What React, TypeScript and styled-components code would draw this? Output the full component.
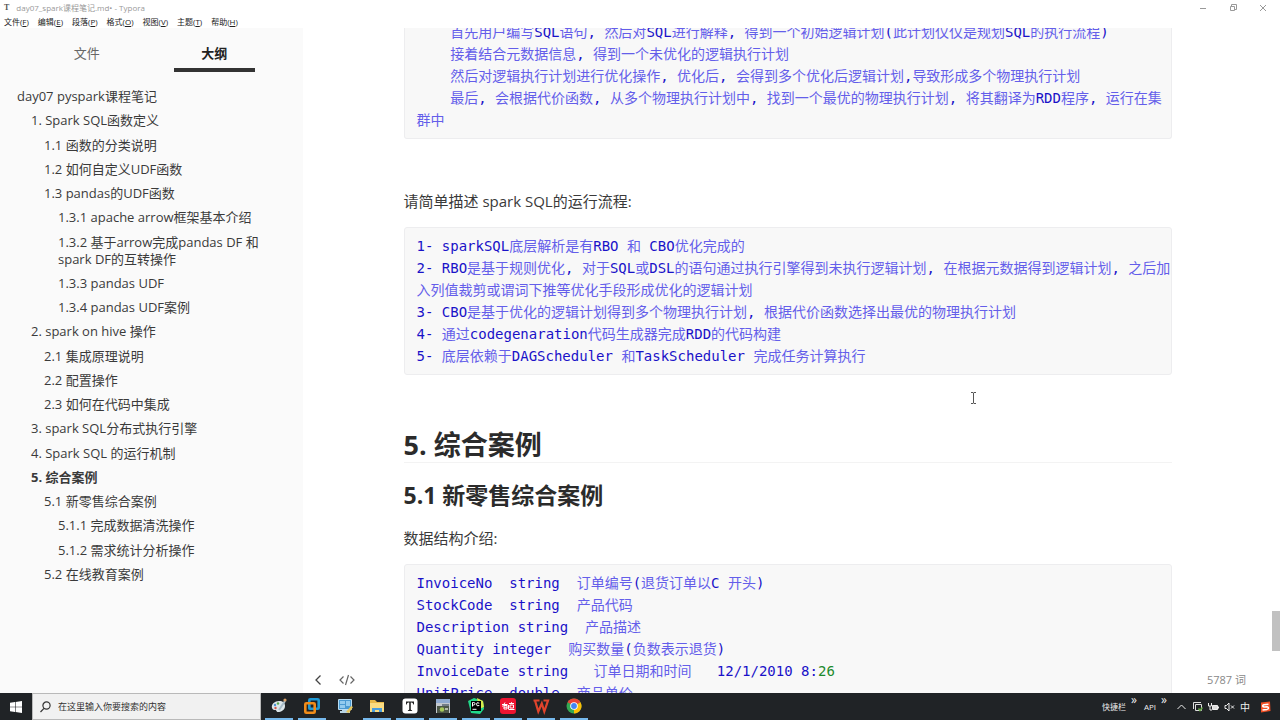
import React from 'react';
import styled, { createGlobalStyle } from 'styled-components';

const uiFont = '"Open Sans", "Noto Sans CJK SC", sans-serif';
const monoFont = '"DejaVu Sans Mono", "Noto Sans CJK SC", monospace';

const GlobalStyle = createGlobalStyle`
  * { box-sizing: border-box; }
  body { margin: 0; background: #fff; font-family: ${uiFont}; color: #3a3a3a; }
  button, input { font: inherit; color: inherit; margin: 0; padding: 0; border: 0; background: none; }
  h2, h3, p, pre, ul { margin: 0; padding: 0; }
  a { color: inherit; text-decoration: none; }
`;

const Desktop = styled.div`
  display: flex;
  flex-direction: column;
  height: 100vh;
  overflow: hidden;
`;

const TitleBar = styled.header`
  display: flex;
  align-items: center;
  justify-content: space-between;
  height: 15px;
  padding: 0 12px 0 4px;
  font-size: 8px;
  line-height: 15px;
  color: #999;
`;

const TitleText = styled.div`
  display: flex;
  gap: 7px;
`;

const Logo = styled.span`
  font-family: "Liberation Serif", serif;
  font-weight: 700;
  color: #555;
`;

const WindowButtons = styled.div`
  display: flex;
  gap: 20px;
`;

const IconButton = styled.button`
  display: flex;
  align-items: center;
  justify-content: center;
`;

const MenuBar = styled.nav`
  display: flex;
  gap: 9px;
  height: 13px;
  padding-left: 4px;
  font-size: 8px;
  line-height: 14px;
  color: #222;
`;

const MenuButton = styled.button`
  white-space: nowrap;
`;

const Workspace = styled.div`
  display: flex;
  flex: 1;
  min-height: 0;
`;

const Sidebar = styled.aside`
  flex: none;
  width: 303px;
  background: #fafafa;
`;

const Tabs = styled.div`
  display: flex;
  justify-content: space-around;
  padding: 11px 25px 0 23px;
`;

const Tab = styled.button<{ $active?: boolean }>`
  width: 81px;
  height: 33px;
  padding-bottom: 2px;
  font-size: 13px;
  font-weight: ${(p) => (p.$active ? 700 : 400)};
  color: ${(p) => (p.$active ? '#222' : '#666')};
  border-bottom: 4px solid ${(p) => (p.$active ? '#333' : 'transparent')};
`;

const Outline = styled.ul`
  display: flex;
  flex-direction: column;
  justify-content: space-between;
  min-height: 495px;
  margin-top: 16px;
  padding-right: 40px;
  list-style: none;
  font-size: 13px;
  line-height: 17px;
`;

const OutlineItem = styled.li<{ $level: number; $active?: boolean }>`
  padding-left: ${(p) => [17, 31, 44, 58][p.$level]}px;
  font-weight: ${(p) => (p.$active ? 700 : 400)};
`;

const Editor = styled.main`
  position: relative;
  display: flex;
  flex: 1;
  min-width: 0;
  overflow: hidden;
`;

const Page = styled.article`
  flex: 1;
  max-width: 768px;
  margin: -7px auto 0;
`;

const CodeBlock = styled.pre<{ $continued?: boolean }>`
  padding: ${(p) => (p.$continued ? '0' : '7px')} 0 7px 12px;
  border: 1px solid #ededef;
  border-top-width: ${(p) => (p.$continued ? 0 : 1)}px;
  border-radius: 3px;
  background: #f8f8f8;
  font-family: ${monoFont};
  font-size: 14px;
  line-height: 22px;
  color: #1a12c8;
`;

const CodeLine = styled.div`
  height: 22px;
  white-space: pre;
`;

const Han = styled.span`
  color: #645eea;
`;

const Num = styled.span`
  color: #1c8a2c;
`;

const Paragraph = styled.p<{ $first?: boolean }>`
  margin: ${(p) => (p.$first ? '50px 0 14px' : '15px 0 14px')};
  font-size: 15px;
  line-height: 24px;
`;

const ChapterTitle = styled.h2`
  margin-top: 53px;
  border-bottom: 1px solid #f3f3f3;
  font-size: 27px;
  line-height: 34px;
  color: #2b2b2b;
`;

const SectionTitle = styled.h3`
  margin-top: 16px;
  font-size: 23px;
  line-height: 32px;
  color: #2b2b2b;
`;

const Scrollbar = styled.div`
  display: flex;
  flex: none;
  width: 8px;
  padding-top: 583px;
`;

const Thumb = styled.div`
  width: 8px;
  height: 40px;
  background: #c1c1c1;
`;

const StatusTools = styled.div`
  position: absolute;
  left: 10px;
  bottom: 6px;
  display: flex;
  gap: 16px;
`;

const WordCount = styled.button`
  position: absolute;
  right: 34px;
  bottom: 5px;
  font-size: 11px;
  line-height: 16px;
  color: #888;
`;

const Caret = styled.svg`
  position: absolute;
  left: 667px;
  top: 364px;
`;

const Taskbar = styled.footer`
  display: flex;
  flex: none;
  align-items: stretch;
  height: 27px;
  background: #202326;
  color: #eee;
`;

const StartButton = styled(IconButton)`
  width: 32px;
`;

const SearchBox = styled.label`
  display: flex;
  align-items: center;
  gap: 7px;
  width: 229px;
  padding-left: 7px;
  border: 1px solid #b9b9b9;
  background: #f1f1f1;
  color: #333;
`;

const SearchInput = styled.input`
  flex: 1;
  min-width: 0;
  font-size: 9px;
  outline: none;
  &::placeholder { color: #333; opacity: 1; }
`;

const Apps = styled.div`
  display: flex;
  justify-content: space-between;
  width: 323px;
  margin-left: 4px;
`;

const AppButton = styled(IconButton)<{ $running?: boolean }>`
  width: 28px;
  border-bottom: 2px solid ${(p) => (p.$running ? '#76b9ed' : 'transparent')};
`;

const Tray = styled.div`
  display: flex;
  align-items: center;
  gap: 5px;
  margin-left: auto;
  padding-right: 9px;
  font-size: 8px;
`;

const Toolbar = styled.button`
  display: flex;
  align-items: center;
  gap: 5px;
  height: 22px;
  margin-right: 2px;
`;

const More = styled.span`
  align-self: flex-start;
  font-size: 12px;
  line-height: 8px;
`;

const TrayIcons = styled.div`
  display: flex;
  align-items: center;
  gap: 5px;
  margin-left: 2px;
`;

const ImeMode = styled(IconButton)`
  margin-right: 4px;
  font-size: 10px;
`;

const menus: [string, string][] = [
  ['文件', 'F'], ['编辑', 'E'], ['段落', 'P'], ['格式', 'O'], ['视图', 'V'], ['主题', 'T'], ['帮助', 'H'],
];

const outline: [number, string][] = [
  [0, 'day07 pyspark课程笔记'],
  [1, '1. Spark SQL函数定义'],
  [2, '1.1 函数的分类说明'],
  [2, '1.2 如何自定义UDF函数'],
  [2, '1.3 pandas的UDF函数'],
  [3, '1.3.1 apache arrow框架基本介绍'],
  [3, '1.3.2 基于arrow完成pandas DF 和 spark DF的互转操作'],
  [3, '1.3.3 pandas UDF'],
  [3, '1.3.4 pandas UDF案例'],
  [1, '2. spark on hive 操作'],
  [2, '2.1 集成原理说明'],
  [2, '2.2 配置操作'],
  [2, '2.3 如何在代码中集成'],
  [1, '3. spark SQL分布式执行引擎'],
  [1, '4. Spark SQL 的运行机制'],
  [1, '5. 综合案例'],
  [2, '5.1 新零售综合案例'],
  [3, '5.1.1 完成数据清洗操作'],
  [3, '5.1.2 需求统计分析操作'],
  [2, '5.2 在线教育案例'],
];

const planCode = [
  '    首先用户编写SQL语句, 然后对SQL进行解释, 得到一个初始逻辑计划(此计划仅仅是规划SQL的执行流程)',
  '    接着结合元数据信息, 得到一个未优化的逻辑执行计划',
  '    然后对逻辑执行计划进行优化操作, 优化后, 会得到多个优化后逻辑计划,导致形成多个物理执行计划',
  '    最后, 会根据代价函数, 从多个物理执行计划中, 找到一个最优的物理执行计划, 将其翻译为RDD程序, 运行在集',
  '群中',
];

const flowCode = [
  '1- sparkSQL底层解析是有RBO 和 CBO优化完成的',
  '2- RBO是基于规则优化, 对于SQL或DSL的语句通过执行引擎得到未执行逻辑计划, 在根据元数据得到逻辑计划, 之后加',
  '入列值裁剪或谓词下推等优化手段形成优化的逻辑计划',
  '3- CBO是基于优化的逻辑计划得到多个物理执行计划, 根据代价函数选择出最优的物理执行计划',
  '4- 通过codegenaration代码生成器完成RDD的代码构建',
  '5- 底层依赖于DAGScheduler 和TaskScheduler 完成任务计算执行',
];

const schemaCode = [
  'InvoiceNo  string  订单编号(退货订单以C 开头)',
  'StockCode  string  产品代码',
  'Description string  产品描述',
  'Quantity integer  购买数量(负数表示退货)',
  'InvoiceDate string   订单日期和时间   12/1/2010 8:26',
  'UnitPrice  double  商品单价',
];

function Code({ lines, continued }: { lines: string[]; continued?: boolean }) {
  return (
    <CodeBlock $continued={continued}>
      {lines.map((line) => (
        <CodeLine key={line}>
          {line.split(/([\u4e00-\u9fff]+|:\d+)/).map((part, i) => {
            if (/^[\u4e00-\u9fff]/.test(part)) return <Han key={i}>{part}</Han>;
            if (/^:\d/.test(part)) return <React.Fragment key={i}>:<Num>{part.slice(1)}</Num></React.Fragment>;
            return part;
          })}
        </CodeLine>
      ))}
    </CodeBlock>
  );
}

const PaintIcon = () => (
  <svg width="18" height="18" viewBox="0 0 18 18">
    <path d="M2 11C1 7 5 4 9 4c4 0 6 2 6 5 0 4-4 6-7 6-2 0-1-2-3-2-1 0-2 0-3-2z" fill="#dce6ea" />
    <circle cx="5" cy="8" r="1.2" fill="#4a90d0" /><circle cx="8" cy="6.500" r="1.200" fill="#5aa850" />
    <circle cx="5.500" cy="11" r="1.200" fill="#d2574a" />
    <path d="M9 13l6-9" stroke="#a8bcc8" strokeWidth="2" /><circle cx="15" cy="3" r="1.600" fill="#d9a066" />
  </svg>
);
const VmwareIcon = () => (
  <svg width="18" height="18" viewBox="0 0 18 18" fill="none" strokeWidth="2.600">
    <rect x="6.300" y="2.300" width="9.400" height="9.400" rx="1" stroke="#1f9ad6" />
    <rect x="2.300" y="6.300" width="9.400" height="9.400" rx="1" stroke="#f08c1a" />
    <path d="M6.300 8v3.700H10" stroke="#1f9ad6" strokeWidth="1.600" />
  </svg>
);
const MonitorIcon = () => (
  <svg width="18" height="18" viewBox="0 0 18 18">
    <rect x="2" y="2" width="14" height="11" rx="1" fill="#b8dcf2" />
    <rect x="3" y="3" width="12" height="9" fill="#4b9ad2" />
    <path d="M4 4h5v3H4zM10 4h4v5h-4zM4 8h5v3H4z" fill="#93cbee" />
    <path d="M6 13h6v1h2v2H4v-2h2z" fill="#b8d4e4" />
    <path d="M10 15l5-6 2 1-4 6z" fill="#e5c45c" />
  </svg>
);
const FolderIcon = () => (
  <svg width="18" height="18" viewBox="0 0 18 18">
    <path d="M2 3h5l2 2h7v10H2z" fill="#e9b949" /><path d="M2 6h14v9H2z" fill="#fbdc81" />
    <path d="M4 15v-4h10v4h-3v-2H7v2z" fill="#4a9ddb" />
  </svg>
);
const TyporaIcon = () => (
  <svg width="18" height="18" viewBox="0 0 18 18">
    <rect x="1.500" y="1.500" width="15" height="15" rx="3" fill="#fff" />
    <path d="M5 4.500h8v3h-.7q-.2-2-2-2H9.800v7q0 .8 1.300.8v.7H6.900v-.7q1.300 0 1.300-.8v-7h-.5q-1.800 0-2 2H5z" fill="#222" />
  </svg>
);
const NotesIcon = () => (
  <svg width="18" height="18" viewBox="0 0 18 18">
    <rect x="2" y="2" width="14" height="14" fill="#c3c8ce" /><rect x="2" y="2" width="14" height="4" fill="#8fa9cf" />
    <path d="M8 8h7" stroke="#596470" strokeWidth="1.500" />
    <rect x="3" y="9" width="12" height="7" fill="#4c5648" />
    <circle cx="8" cy="12.500" r="2.300" fill="#a6c85a" /><path d="M11 12h3" stroke="#d5dcc8" strokeWidth="1.500" />
  </svg>
);
const PycharmIcon = () => (
  <svg width="18" height="18" viewBox="0 0 18 18">
    <path d="M1 4l6-3 9 3 1 8-4 5-9-1z" fill="#21d789" /><path d="M10 1l6 3 1 6-5 2z" fill="#d8ea4c" />
    <rect x="4" y="4" width="10" height="10" fill="#000" />
    <path d="M5.500 9.500V5.500h1.300q1.200 0 1.200 1.200T6.800 8H5.500M12.300 6.200q-2.800-1.500-2.800 1t2.800 1.300M5.500 12.300h4" fill="none" stroke="#fff" />
  </svg>
);
const YoudaoIcon = () => (
  <svg width="18" height="18" viewBox="0 0 18 18">
    <rect x="1" y="1" width="16" height="16" rx="3" fill="#ee1430" />
    <path d="M3 7.500h5.500M6 5.500l-2.500 4M5 8.500h3v3.500H5zM5 10.200h3M10 6.500h5M11 8h3.500v3h-3.500zM9.500 12.500H15.500M12.500 5.200v1.500M9.500 8v4" fill="none" stroke="#fff" strokeWidth="1" />
  </svg>
);
const WpsIcon = () => (
  <svg width="18" height="18" viewBox="0 0 18 18">
    <path d="M1.500 3.500h6M3 3.500l3.300 11 3.500-8 2.500 8L16 3.500h-4.500" fill="none" stroke="#e0442c" strokeWidth="2.200" />
  </svg>
);
const ChromeIcon = () => (
  <svg width="18" height="18" viewBox="0 0 18 18">
    <circle cx="9" cy="9" r="7.500" fill="#34a853" />
    <path d="M9 9L2.500 5.250A7.500 7.500 0 0 1 15.500 5.250z" fill="#ea4335" />
    <path d="M9 9l6.500-3.750A7.500 7.500 0 0 1 9 16.500z" fill="#fbbc05" />
    <circle cx="9" cy="9" r="3.800" fill="#fff" /><circle cx="9" cy="9" r="2.900" fill="#4285f4" />
  </svg>
);

const apps: [string, React.FC, boolean][] = [
  ['画图', PaintIcon, true],
  ['VMware', VmwareIcon, true],
  ['远程桌面', MonitorIcon, false],
  ['文件资源管理器', FolderIcon, true],
  ['Typora', TyporaIcon, true],
  ['记事', NotesIcon, true],
  ['PyCharm', PycharmIcon, true],
  ['有道', YoudaoIcon, true],
  ['WPS', WpsIcon, true],
  ['Chrome', ChromeIcon, true],
];

export default function App() {
  return (
    <Desktop>
      <GlobalStyle />
      <TitleBar>
        <TitleText>
          <Logo>T</Logo>
          <span>day07_spark课程笔记.md• - Typora</span>
        </TitleText>
        <WindowButtons>
          <IconButton aria-label="最小化">
            <svg width="10" height="10" fill="none" stroke="#999"><path d="M2 5.500h6" /></svg>
          </IconButton>
          <IconButton aria-label="还原">
            <svg width="10" height="10" fill="none" stroke="#999"><path d="M2.500 3.500h4v4h-4zM3.500 3.500V1.500h5v5H7" /></svg>
          </IconButton>
          <IconButton aria-label="关闭">
            <svg width="10" height="10" fill="none" stroke="#999"><path d="M2 2l6 6M8 2L2 8" /></svg>
          </IconButton>
        </WindowButtons>
      </TitleBar>
      <MenuBar>
        {menus.map(([name, key]) => (
          <MenuButton key={key}>{name}(<u>{key}</u>)</MenuButton>
        ))}
      </MenuBar>
      <Workspace>
        <Sidebar>
          <Tabs>
            <Tab>文件</Tab>
            <Tab $active>大纲</Tab>
          </Tabs>
          <Outline>
            {outline.map(([level, text]) => (
              <OutlineItem key={text} $level={level} $active={text === '5. 综合案例'}>
                <a href="#outline">{text}</a>
              </OutlineItem>
            ))}
          </Outline>
        </Sidebar>
        <Editor>
          <Page>
            <Code lines={planCode} continued />
            <Paragraph $first>请简单描述 spark SQL的运行流程:</Paragraph>
            <Code lines={flowCode} />
            <ChapterTitle>5. 综合案例</ChapterTitle>
            <SectionTitle>5.1 新零售综合案例</SectionTitle>
            <Paragraph>数据结构介绍:</Paragraph>
            <Code lines={schemaCode} />
          </Page>
          <Scrollbar><Thumb /></Scrollbar>
          <Caret width="7" height="12" fill="none" stroke="#555"><path d="M1 .5h2l.5.5.5-.5h2M3.500 1v10M1 11.500h2l.5-.5.5.5h2" /></Caret>
          <StatusTools>
            <IconButton aria-label="隐藏侧边栏">
              <svg width="10" height="14" fill="none" stroke="#444" strokeWidth="1.300"><path d="M7.500 2.500L3 7l4.500 4.500" /></svg>
            </IconButton>
            <IconButton aria-label="源代码模式">
              <svg width="16" height="14" fill="none" stroke="#666" strokeWidth="1.200"><path d="M4.500 3.500L1 7l3.500 3.500M11.500 3.500L15 7l-3.500 3.500M9.500 2l-3 10" /></svg>
            </IconButton>
          </StatusTools>
          <WordCount>5787 词</WordCount>
        </Editor>
      </Workspace>
      <Taskbar>
        <StartButton aria-label="开始">
          <svg width="12" height="12" viewBox="0 0 12 12" fill="#fff"><path d="M0 1.700l5-.7v4.700H0zM5.600.9L12 0v5.700H5.600zM0 6.300h5V11l-5-.7zM5.600 6.300H12V12l-6.400-.9z" /></svg>
        </StartButton>
        <SearchBox>
          <svg width="11" height="12" fill="none" stroke="#333" strokeWidth="1.200"><circle cx="6.500" cy="4.500" r="3.600" /><path d="M4 7.300L.5 11" /></svg>
          <SearchInput aria-label="搜索" placeholder="在这里输入你要搜索的内容" />
        </SearchBox>
        <Apps>
          {apps.map(([name, Icon, running]) => (
            <AppButton key={name} aria-label={name} $running={running}><Icon /></AppButton>
          ))}
        </Apps>
        <Tray>
          <Toolbar>快捷栏<More>»</More></Toolbar>
          <Toolbar>API<More>»</More></Toolbar>
          <TrayIcons>
            <IconButton aria-label="显示隐藏的图标">
              <svg width="11" height="10" fill="none" stroke="#eee"><path d="M1.500 7l4-4 4 4" /></svg>
            </IconButton>
            <IconButton aria-label="安全">
              <svg width="11" height="11" fill="none" stroke="#ddd"><path d="M1.500 8V1.500H9M3.500 3.500h6v6h-6z" /><path d="M6.500 7.500l1.500 2 2.500-3" stroke="#6a4" strokeWidth="1.500" /></svg>
            </IconButton>
            <IconButton aria-label="电池">
              <svg width="11" height="10" fill="none" stroke="#eee"><path d="M4.500 3.500h5v4h-5z" fill="#ddd" /><path d="M.5 1v3h3V1M2 4v4h2M10.500 4.500v2" /></svg>
            </IconButton>
            <IconButton aria-label="音量">
              <svg width="11" height="10" fill="none" stroke="#eee"><path d="M1 3.500h1.500L5 1v8L2.500 6.500H1zM7 3.500l3 3M10 3.500l-3 3" /></svg>
            </IconButton>
            <ImeMode aria-label="输入法">中</ImeMode>
            <IconButton aria-label="搜狗输入法">
              <svg width="12" height="12"><path d="M2 1.500l9-1 .5 9.500-9.500 1.500z" fill="#f04e23" /><path d="M9.500 3.200L5 3.700Q3.500 4 3.700 5t1.600 1l2.900-.2Q9.500 6 9.500 7T8 8.400L3.500 9" fill="none" stroke="#fff" strokeWidth="1.500" /></svg>
            </IconButton>
          </TrayIcons>
        </Tray>
      </Taskbar>
    </Desktop>
  );
}
